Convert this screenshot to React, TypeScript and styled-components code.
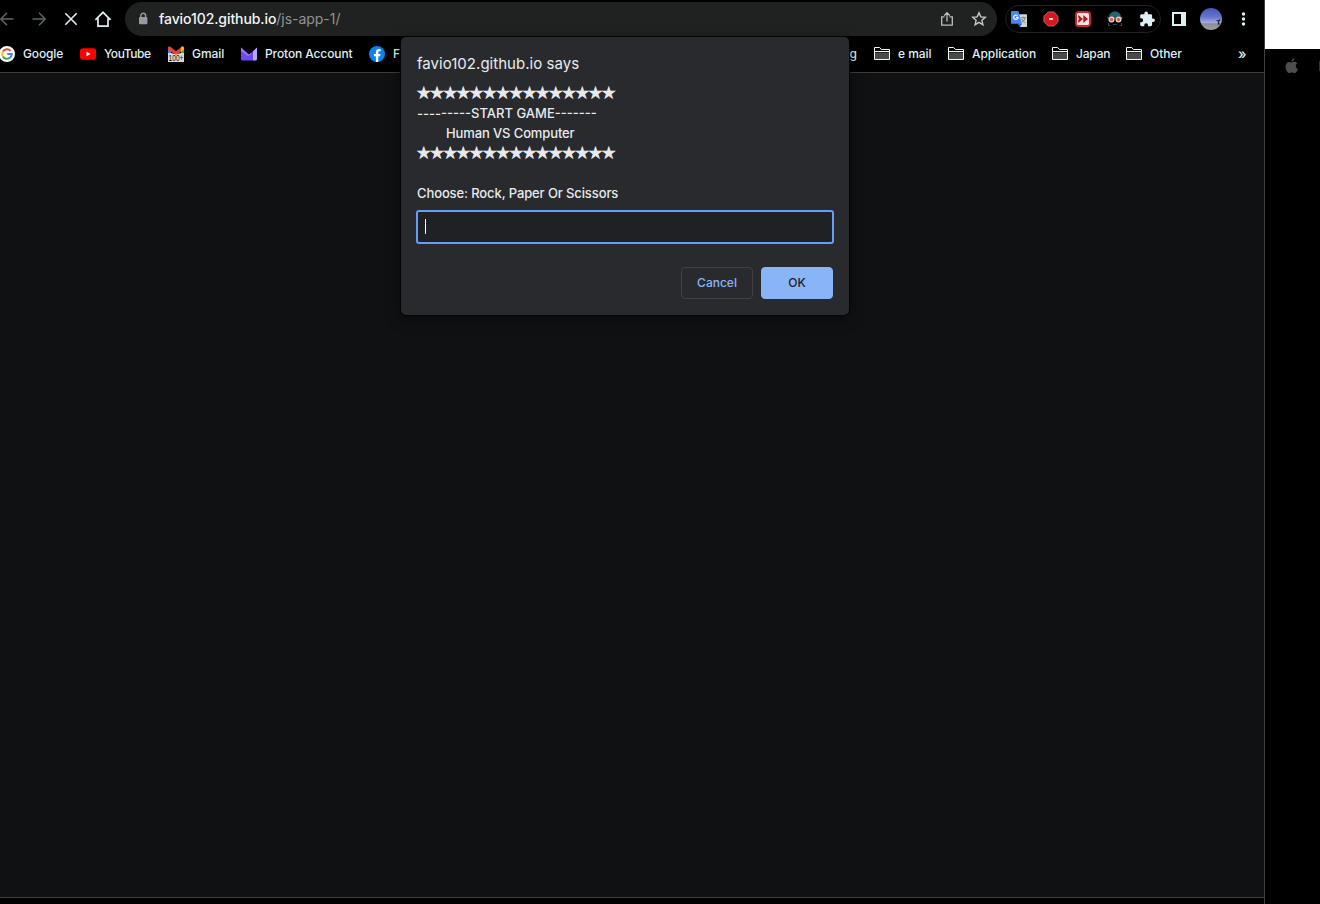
import React from "react";
import styled, { createGlobalStyle } from "styled-components";

const Global = createGlobalStyle`
  * { box-sizing: border-box; }
  html, body { margin: 0; background: #000; overflow: hidden; }
  body { font-family: Inter, "Liberation Sans", sans-serif; -webkit-font-smoothing: antialiased; }
  svg { display: block; flex: none; overflow: visible; }
`;

const Screen = styled.div`
  display: flex;
  width: 1320px;
  height: 904px;
  overflow: hidden;
  background: #000;
`;

const Browser = styled.div`
  position: relative;
  display: flex;
  flex-direction: column;
  width: 1265px;
  height: 904px;
  border-right: 1px solid #404142;
`;

const Toolbar = styled.header`
  display: flex;
  align-items: center;
  height: 38px;
`;

const NavButtons = styled.nav`
  display: flex;
  gap: 12px;
  margin-left: -3px;
  width: 128px;
`;

const AddressBar = styled.div`
  display: flex;
  align-items: center;
  width: 872px;
  height: 34px;
  padding: 0 8px;
  border-radius: 17px;
  background: #202221;
`;

const Url = styled.div`
  flex: 1;
  margin-left: 6px;
  font-size: 14px;
  line-height: 20px;
  color: #909392;
  letter-spacing: -0.04px;
  white-space: nowrap;
`;

const Host = styled.span`
  color: #f3f5f5;
  font-weight: 500;
  letter-spacing: -0.08px;
`;

const PageActions = styled.div`
  display: flex;
  gap: 12px;
`;

const Extensions = styled.div`
  display: flex;
  align-items: center;
  gap: 12px;
  width: 156px;
  height: 28px;
  margin-left: 8px;
  padding-left: 3px;
  border: 1px solid #1f2122;
  border-radius: 14px;
`;

const WindowTools = styled.div`
  display: flex;
  align-items: center;
  gap: 8px;
  margin-left: 6px;
`;

const Bookmarks = styled.div`
  display: flex;
  align-items: center;
  height: 35px;
  padding-bottom: 3px;
  border-bottom: 1px solid #3c3e40;
`;

const Bookmark = styled.div<{ $w: number }>`
  display: flex;
  align-items: center;
  gap: 8px;
  width: ${(p) => p.$w}px;
  flex: none;
`;

const FirstBookmark = styled(Bookmark)`
  margin-left: -1px;
`;

const BookmarkText = styled.span<{ $track?: number }>`
  font-size: 12px;
  line-height: 16px;
  font-weight: 500;
  color: #def0f4;
  white-space: nowrap;
  letter-spacing: ${(p) => p.$track ?? -0.06}px;
`;

const Overflow = styled(BookmarkText)`
  font-size: 14px;
  line-height: 15px;
`;

const CoveredBookmarks = styled.div`
  display: flex;
  justify-content: flex-end;
  width: 456px;
`;

const FolderGroup = styled.div`
  display: flex;
  flex: 1;
  margin-left: 17px;
`;

const Page = styled.main`
  height: 825px;
  background: #101113;
  border-bottom: 1px solid #3b3d3c;
`;

const Desktop = styled.aside`
  display: flex;
  flex-direction: column;
  width: 55px;
  background: #000;
`;

const WhiteStrip = styled.div`
  height: 49px;
  background: #fff;
`;

const MenuBar = styled.div`
  display: flex;
  align-items: center;
  justify-content: space-between;
  height: 34px;
  padding-left: 19px;
`;

const MenuEdge = styled.div`
  width: 1px;
  height: 10px;
  background: #303030;
`;

const Dialog = styled.section`
  position: absolute;
  left: 401px;
  top: 37px;
  width: 448px;
  height: 278px;
  padding: 17px 15px 16px 16px;
  border-radius: 5px;
  background: #292a2d;
  box-shadow: 0 0 0 1px #050506, 0 3px 14px rgba(0, 0, 0, 0.55);
  color: #e8eaed;
`;

const Title = styled.h1`
  margin: 0 0 9px;
  font-size: 15px;
  line-height: 20px;
  font-weight: 400;
  letter-spacing: 0.03px;
`;

const Line = styled.div<{ $indent?: number; $track?: number }>`
  height: 20px;
  padding-left: ${(p) => p.$indent ?? 0}px;
  font-size: 13px;
  line-height: 20px;
  font-weight: 450;
  white-space: nowrap;
  letter-spacing: ${(p) => p.$track ?? 0}px;
`;

const Stars = styled(Line)`
  font-family: "DejaVu Sans", sans-serif;
  font-size: 15px;
  font-weight: 400;
  letter-spacing: -0.24px;
  -webkit-text-stroke: 0.9px #e8eaed;
`;

const Field = styled.div`
  display: flex;
  align-items: center;
  width: 418px;
  height: 34px;
  margin: 7px 0 23px -1px;
  padding: 0 0 1px 7px;
  border: 2px solid #669df6;
  border-radius: 3px;
  background: #202124;
`;

const Caret = styled.div`
  width: 1px;
  height: 15px;
  background: #fff;
`;

const Actions = styled.div`
  display: flex;
  justify-content: flex-end;
  gap: 8px;
  padding-right: 1px;
`;

const Button = styled.button<{ $primary?: boolean }>`
  width: 72px;
  height: 32px;
  padding: 0;
  border: 1px solid ${(p) => (p.$primary ? "#8ab4f8" : "#3f4144")};
  border-radius: 4px;
  background: ${(p) => (p.$primary ? "#8ab4f8" : "transparent")};
  color: ${(p) => (p.$primary ? "#202124" : "#8ab4f8")};
  font: 500 12px/16px Inter, sans-serif;
`;

const ICE = "#def0f4";

const Box = ({ size = 20, children }: { size?: number; children: React.ReactNode }) => (
  <svg width={size} height={size} viewBox={`0 0 ${size} ${size}`} fill="none">{children}</svg>
);

const BackIcon = () => (
  <Box><path d="M16.5 10H4M10 3.8 3.8 10l6.2 6.2" stroke="#5d6564" strokeWidth="1.5" /></Box>
);
const ForwardIcon = () => (
  <Box><path d="M3.5 10H16M10 3.8l6.2 6.2-6.2 6.2" stroke="#5d6564" strokeWidth="1.5" /></Box>
);
const StopIcon = () => (
  <Box><path d="m4.3 4.3 11.4 11.4M15.7 4.3 4.3 15.7" stroke={ICE} strokeWidth="1.6" /></Box>
);
const HomeIcon = () => (
  <Box><path d="M2.4 10.9 10 3.3l7.6 7.6M5 9.3v7.9h10V9.3" stroke={ICE} strokeWidth="1.7" /></Box>
);
const LockIcon = () => (
  <Box>
    <rect x="6" y="8" width="8.4" height="7.2" rx="1" fill="#969b9f" />
    <path d="M7.8 8V6.6a2.4 2.4 0 0 1 4.8 0V8" stroke="#969b9f" strokeWidth="1.4" />
  </Box>
);
const ShareIcon = () => (
  <Box>
    <path d="M7.5 7.8H4.7v8.4h10.6V7.8h-2.8M10 12.5V4M7.1 6.6 10 3.7l2.9 2.9" stroke="#bbbfbe" strokeWidth="1.3" />
  </Box>
);
const StarIcon = () => (
  <Box>
    <path d="m10 3.8 1.8 4.1 4.5.4-3.4 3 1 4.4-3.9-2.3-3.9 2.3 1-4.4-3.4-3 4.5-.4z" stroke="#c5c9c8" strokeWidth="1.4" />
  </Box>
);
const TranslateIcon = () => (
  <Box>
    <path d="M8 5.2h9.2q.8 0 .8.8v11.4q0 .6-.6.6H11z" fill="#cfd3d2" />
    <path d="M12 8.8h5M14.3 7.7v1.1M16 9c-.5 2.2-2 3.7-3.3 4.5M12.8 10c.7 1.7 1.8 2.6 3.5 3.7" stroke="#6b8285" strokeWidth="1" />
    <path d="M2.8 2h6.6l3.5 12.7H2.8Q2 14.7 2 13.9V2.8Q2 2 2.8 2z" fill="#4688f1" />
    <path d="M8.4 14.7h4.5L11 18z" fill="#2b5fc8" />
    <path d="M8.5 6.7a2.2 2.2 0 1 0 .6 1.700H7" stroke="#fff" strokeWidth="1.2" />
  </Box>
);
const RecordIcon = () => (
  <Box>
    <path d="M7.2 3h5.6L17 7.2v5.6L12.8 17H7.2L3 12.8V7.2z" fill="#dc151c" stroke="#a67674" strokeWidth=".9" />
    <rect x="8.2" y="9" width="3.6" height="2" rx=".5" fill="#fff" />
  </Box>
);
const SpeedIcon = () => (
  <Box>
    <rect x="3" y="3" width="14" height="14" rx="2.5" fill="#f1e5e4" stroke="#c7282b" strokeWidth="2" />
    <path d="M5.300 6 10 10l-4.700 4zM10.300 6l4.700 4-4.700 4z" fill="#b5171d" />
    <path d="M4.800 8.800 6.300 10l-1.500 1.200z" fill="#f1e5e4" />
  </Box>
);
const GogglesIcon = () => (
  <Box>
    <path d="M4 8c.5-4.2 3-5.500 6-5.500S15.500 3.800 16 8z" fill="#286273" />
    <path d="M2.500 8.800h15" stroke="#355f69" strokeWidth="2.2" />
    <circle cx="6.500" cy="10.600" r="2.400" fill="#e75c48" stroke="#e5d9d2" strokeWidth="1.2" />
    <circle cx="13.500" cy="10.600" r="2.400" fill="#e75c48" stroke="#e5d9d2" strokeWidth="1.2" />
    <path d="M3.500 14v2.500h2M16.500 14v2.500h-2M8 15.500h4" stroke="#34474a" strokeWidth="1.2" />
  </Box>
);
const PuzzleIcon = () => (
  <Box>
    <path transform="translate(1.8 1.8) scale(.7)" d="M20.5 11H19V7c0-1.100-.9-2-2-2h-4V3.500a2.500 2.500 0 0 0-5 0V5H4c-1.100 0-2 .9-2 2v3.800h1.500a2.700 2.700 0 0 1 0 5.400H2V20c0 1.100.9 2 2 2h3.800v-1.500a2.700 2.700 0 0 1 5.400 0V22H17c1.100 0 2-.9 2-2v-4h1.500a2.500 2.500 0 0 0 0-5z" fill={ICE} />
  </Box>
);
const PanelIcon = () => (
  <Box size={24}>
    <path fillRule="evenodd" d="M5 5h14v14H5zm2 2v10h7V7z" fill={ICE} />
  </Box>
);
const Avatar = () => (
  <svg width="24" height="24" viewBox="0 0 24 24">
    <defs>
      <linearGradient id="sky" x1="0" y1="0" x2="0" y2="1">
        <stop offset="0" stopColor="#4856bc" />
        <stop offset=".4" stopColor="#6673cd" />
        <stop offset=".66" stopColor="#a2a9dc" />
        <stop offset=".72" stopColor="#8d8e96" />
        <stop offset="1" stopColor="#a1a09d" />
      </linearGradient>
    </defs>
    <circle cx="12" cy="12" r="11" fill="url(#sky)" />
    <path d="M17.500 13.500 19.500 14l1.800-1.500M19.800 13v4.500M19.800 15l-.8 2.500" stroke="#24243d" strokeWidth="1.2" fill="none" />
  </svg>
);
const MoreIcon = () => (
  <Box size={24}>
    <circle cx="12.5" cy="7" r="1.7" fill={ICE} />
    <circle cx="12.5" cy="12" r="1.7" fill={ICE} />
    <circle cx="12.5" cy="17" r="1.7" fill={ICE} />
  </Box>
);

const GoogleIcon = () => (
  <Box size={16}>
    <circle cx="8" cy="8" r="8" fill="#fff" />
    <path d="M3.9 5.6A4.8 4.8 0 0 1 11.500 4.700" stroke="#ea4335" strokeWidth="2" />
    <path d="M3.9 10.400a4.800 4.800 0 0 1 0-4.800" stroke="#fbbc05" strokeWidth="2" />
    <path d="M11.200 11.600a4.800 4.800 0 0 1-7.300-1.200" stroke="#34a853" strokeWidth="2" />
    <path d="M8.200 8h4.600c0 1.600-.6 2.800-1.600 3.600" stroke="#4285f4" strokeWidth="2" />
  </Box>
);
const YouTubeIcon = () => (
  <Box size={16}>
    <rect y="2.300" width="16" height="11.400" rx="2.800" fill="#f00" />
    <path d="m6.500 5.800 4 2.200-4 2.200z" fill="#fff" />
  </Box>
);
const BadgeText = styled.text`
  font: 9px "Liberation Sans", sans-serif;
`;
const GmailIcon = () => (
  <Box size={16}>
    <path d="M0 1.500 3 3v5H0z" fill="#4285f4" />
    <path d="M16 1.500 13 3v5h3z" fill="#34a853" />
    <path d="M0 3V1.500Q0 0 2 .5l6 4.700L14 .5q2-.5 2 1.500v1.500L8 9.200 0 3.500z" fill="#ea4335" />
    <path d="M12.800 1.500 14 .5q2-.5 2 1.500v2l-3.200 2z" fill="#fbbc04" />
    <path d="M0 7h3l5 1.500L13 7h3v9H0z" fill="#d8dad9" />
    <BadgeText x=".6" y="14.600" textLength="14.800" lengthAdjust="spacingAndGlyphs" fill="#111">100+</BadgeText>
  </Box>
);
const ProtonIcon = () => (
  <Box size={16}>
    <path d="M0 1.500 7.200 8q.8.700 1.600 0L12 5.200v9.300H1.500Q0 14.500 0 13z" fill="#7046f5" />
    <path d="M0 1.500 7.200 8q.8.700 1.600 0L10 7v1L7 10.500 0 5z" fill="#9470ff" />
    <path d="M16 1.500V13q0 1.500-1.500 1.500H12V5.200z" fill="#bca5ff" />
  </Box>
);
const FacebookIcon = () => (
  <Box size={16}>
    <circle cx="8" cy="8" r="8" fill="#0b82ee" />
    <path d="M6.900 16v-5.700H4.900V8h2V6.300c0-2.100 1.200-3.200 3-3.200l1.700.1v2h-1c-1 0-1.300.6-1.300 1.300V8h2.200l-.4 2.300H9.300V16z" fill="#fff" />
  </Box>
);
const FolderIcon = () => (
  <Box size={16}>
    <path d="M1 6.500h14v7H1z" fill="#484b4c" />
    <path d="M.5 13.500v-12h5.200l1.600 2h8.200v10zM1 5.500h14" stroke="#f4f5f5" />
  </Box>
);
const AppleIcon = () => (
  <svg width="14" height="18" viewBox="0 0 14 18" fill="#4d4d4d">
    <g transform="translate(.5 .5)">
      <path d="M9.800 1c.1 1.600-1.300 3.100-2.900 3C6.800 2.500 8.200 1.100 9.800 1z" />
      <path d="M7.200 5c.7 0 1.500-.7 2.800-.7 1.100 0 2.200.6 2.800 1.500-2.300 1.500-1.900 4.700.6 5.600-.6 1.700-1.900 4.200-3.300 4.200-1 0-1.500-.6-2.700-.6s-1.800.6-2.700.6C3 15.600 1 12.200 1 9.200 1 6.100 2.900 4.400 4.700 4.400c1.100 0 1.900.6 2.500.6z" />
    </g>
  </svg>
);

const STARS = "★".repeat(15);

export default function App() {
  return (
    <Screen>
      <Global />
      <Browser>
        <Toolbar>
          <NavButtons>
            <BackIcon /><ForwardIcon /><StopIcon /><HomeIcon />
          </NavButtons>
          <AddressBar>
            <LockIcon />
            <Url><Host>favio102.github.io</Host>/js-app-1/</Url>
            <PageActions><ShareIcon /><StarIcon /></PageActions>
          </AddressBar>
          <Extensions>
            <TranslateIcon /><RecordIcon /><SpeedIcon /><GogglesIcon /><PuzzleIcon />
          </Extensions>
          <WindowTools>
            <PanelIcon /><Avatar /><MoreIcon />
          </WindowTools>
        </Toolbar>
        <Bookmarks>
          <FirstBookmark $w={81}><GoogleIcon /><BookmarkText $track={-0.15}>Google</BookmarkText></FirstBookmark>
          <Bookmark $w={88}><YouTubeIcon /><BookmarkText $track={-0.45}>YouTube</BookmarkText></Bookmark>
          <Bookmark $w={73}><GmailIcon /><BookmarkText>Gmail</BookmarkText></Bookmark>
          <Bookmark $w={128}><ProtonIcon /><BookmarkText $track={-0.11}>Proton Account</BookmarkText></Bookmark>
          <Bookmark $w={32}><FacebookIcon /><BookmarkText>Fa</BookmarkText></Bookmark>
          <CoveredBookmarks><BookmarkText>g</BookmarkText></CoveredBookmarks>
          <FolderGroup>
            <Bookmark $w={74}><FolderIcon /><BookmarkText>e mail</BookmarkText></Bookmark>
            <Bookmark $w={104}><FolderIcon /><BookmarkText>Application</BookmarkText></Bookmark>
            <Bookmark $w={74}><FolderIcon /><BookmarkText $track={-0.2}>Japan</BookmarkText></Bookmark>
            <Bookmark $w={112}><FolderIcon /><BookmarkText>Other</BookmarkText></Bookmark>
            <Overflow>»</Overflow>
          </FolderGroup>
        </Bookmarks>
        <Page />
        <Dialog>
          <Title>favio102.github.io says</Title>
          <Stars>{STARS}</Stars>
          <Line>---------START GAME-------</Line>
          <Line $indent={29} $track={-0.12}>Human VS Computer</Line>
          <Stars>{STARS}</Stars>
          <Line />
          <Line $track={-0.11}>Choose: Rock, Paper Or Scissors</Line>
          <Field><Caret /></Field>
          <Actions>
            <Button>Cancel</Button>
            <Button $primary>OK</Button>
          </Actions>
        </Dialog>
      </Browser>
      <Desktop>
        <WhiteStrip />
        <MenuBar><AppleIcon /><MenuEdge /></MenuBar>
      </Desktop>
    </Screen>
  );
}
